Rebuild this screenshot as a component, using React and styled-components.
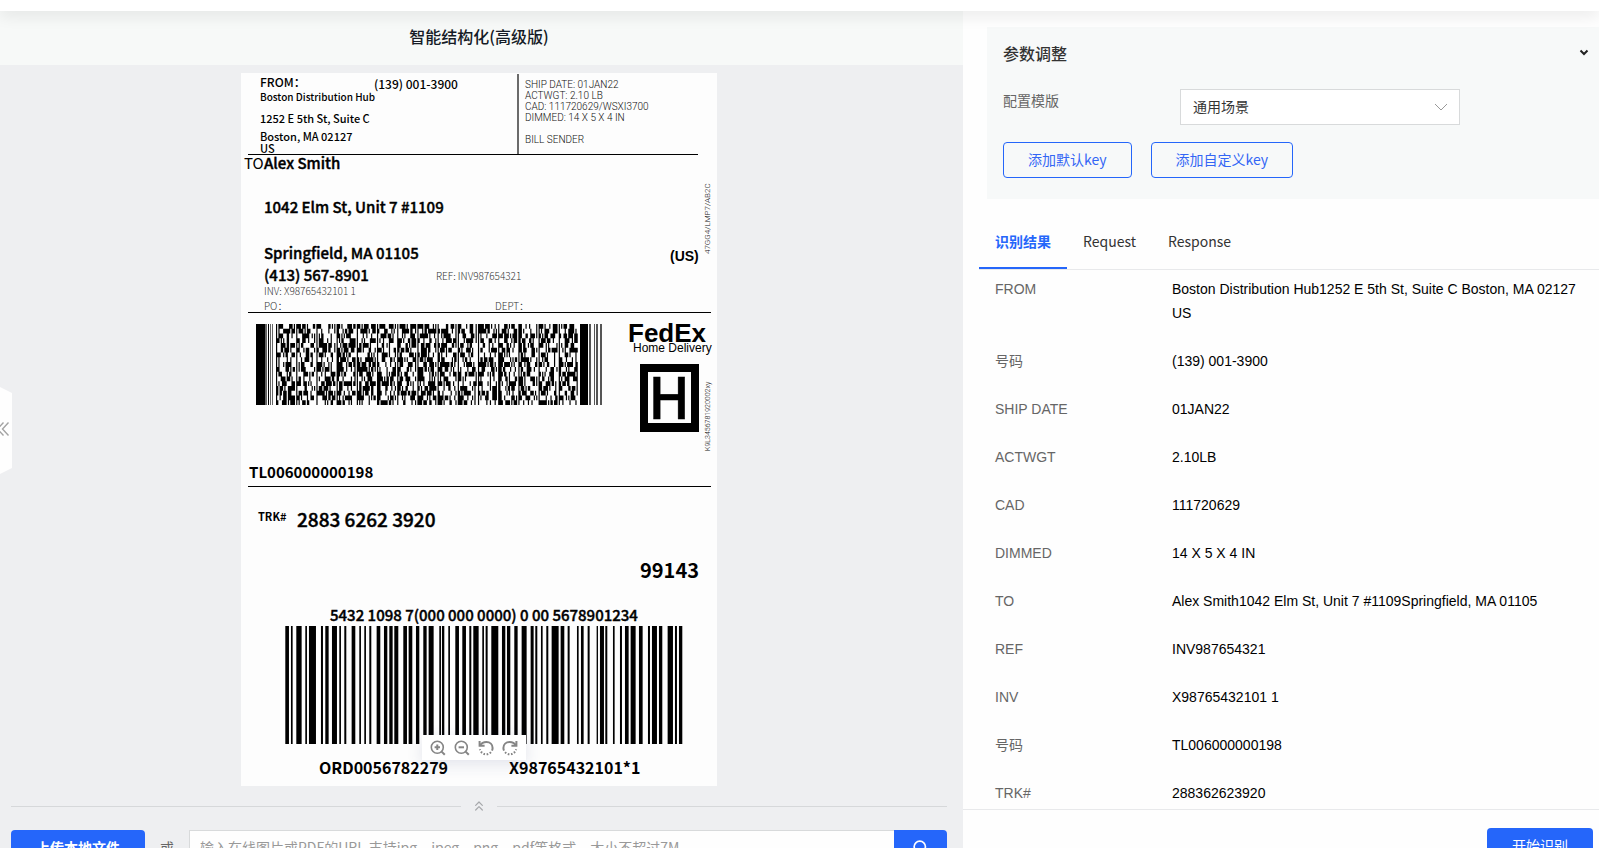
import React, { useState } from "react";
import styled, { createGlobalStyle } from "styled-components";
import { ChevronsUp, Search } from "lucide-react";

const GlobalStyle = createGlobalStyle`
  * {
    box-sizing: border-box;
  }
  body {
    margin: 0;
    overflow: hidden;
    background: #fefefe;
    font-family: "Noto Sans CJK SC", sans-serif;
    font-size: 14px;
    line-height: 24px;
    color: #333;
  }
  button, input, select {
    font: inherit;
  }
`;

const Page = styled.div`
  min-height: 100vh;
  display: flex;
  flex-direction: column;
`;

const TopBar = styled.header`
  height: 11px;
  background: #fff;
  box-shadow: 0 4px 16px rgba(0, 0, 0, 0.1);
  position: relative;
  z-index: 2;
`;

const Main = styled.main`
  flex: 1;
  display: grid;
  grid-template-columns: minmax(0, 1fr) 636px;
`;

const Workspace = styled.section`
  position: relative;
  display: flex;
  flex-direction: column;
  background: #eeeff1;
`;

const WorkspaceTitle = styled.h1`
  margin: 0;
  padding: 13px 16px 17px 11px;
  background: #f7f9f8;
  font-size: 16px;
  font-weight: 500;
  line-height: 24px;
  text-align: center;
  color: #151b26;
`;

const Stage = styled.div`
  display: flex;
  justify-content: center;
  padding: 8px 16px 12px 11px;
`;

const Preview = styled.div`
  position: relative;
  width: 476px;
  max-width: 100%;
`;

const LabelSheet = styled.svg`
  display: block;
  width: 100%;
  height: auto;
  background: #fdfdfd;
  font-family: "Noto Sans CJK SC", sans-serif;

  .bold {
    font-weight: 700;
  }
  .medium {
    font-weight: 500;
  }
  .semi {
    font-weight: 500;
    stroke: #000;
    stroke-width: 0.4;
  }
  .light {
    font-weight: 300;
    fill: #333;
  }
  .thin {
    font-family: Roboto, "Liberation Sans", sans-serif;
    font-weight: 300;
    fill: #111;
  }
  .arial {
    font-family: "Liberation Sans", sans-serif;
  }
`;

const ZoomBar = styled.div`
  position: absolute;
  left: 50%;
  bottom: 26px;
  margin-left: -57px;
  display: flex;
  gap: 8px;
  padding: 5px 8px 4px;
  background: #fff;
  box-shadow: 0 4px 16px rgba(60, 70, 130, 0.14);
`;

const IconButton = styled.button`
  display: flex;
  padding: 0;
  border: none;
  background: none;
  color: #858585;
  cursor: pointer;
`;

const CollapseHandle = styled.button`
  position: absolute;
  left: 0;
  top: 376px;
  width: 12px;
  height: 87px;
  display: flex;
  align-items: center;
  padding: 0 0 3px;
  border: none;
  background: #fefefe;
  clip-path: polygon(0 0, 100% 6px, 100% 81px, 0 100%);
  color: #a3a3a3;
`;

const Divider = styled.div`
  display: flex;
  align-items: center;
  gap: 10px;
  height: 16px;
  margin: 0 16px 0 11px;
  color: #a6a8ab;
  &::before,
  &::after {
    content: "";
    flex: 1;
    height: 1px;
    background: #d6d8da;
  }
`;

const UploadRow = styled.form`
  display: flex;
  padding: 16px 16px 16px 11px;
`;

const PrimaryButton = styled.button`
  width: ${(props) => props.$width}px;
  height: 36px;
  padding: 0 0 2px;
  border: none;
  border-radius: ${(props) => props.$radius || "4px"};
  background: #2566fa;
  color: #fff;
  font-weight: ${(props) => (props.$bold ? 700 : 400)};
  display: flex;
  align-items: center;
  justify-content: center;
  cursor: pointer;
`;

const Or = styled.span`
  padding: 0 15px;
  line-height: 34px;
  color: #666;
`;

const UrlInput = styled.input`
  flex: 1;
  min-width: 0;
  height: 36px;
  padding: 0 10px 2px;
  border: 1px solid #d8dadb;
  border-right: none;
  border-radius: 0;
  background: #fefefe;
  outline: none;
  &::placeholder {
    color: #999;
  }
`;

const Side = styled.aside`
  display: flex;
  flex-direction: column;
  padding-top: 16px;
`;

const Params = styled.section`
  margin-left: 24px;
  padding: 15px 10px 21px 16px;
  background: #f7f9f9;
`;

const ParamsHead = styled.div`
  display: flex;
  justify-content: space-between;
  align-items: center;
  margin-bottom: 25px;
  h2 {
    margin: 0;
    font-size: 16px;
    font-weight: 500;
    line-height: 22px;
    color: #333;
  }
`;

const Field = styled.div`
  display: flex;
  align-items: flex-start;
  margin-bottom: 17px;
  label {
    width: 177px;
    line-height: 22px;
    color: #666;
  }
`;

const SelectBox = styled.div`
  position: relative;
  width: 280px;
  select {
    display: block;
    width: 100%;
    height: 36px;
    padding: 0 12px 2px;
    border: 1px solid #d8dadb;
    border-radius: 0;
    background: #fff;
    color: #333;
    appearance: none;
  }
  svg {
    position: absolute;
    right: 12px;
    top: 14px;
    pointer-events: none;
  }
`;

const KeyButtons = styled.div`
  display: flex;
  gap: 19px;
`;

const OutlineButton = styled.button`
  height: 36px;
  padding: 0 24px 2px;
  border: 1px solid #2566fa;
  border-radius: 4px;
  background: none;
  color: #3366f5;
  line-height: 24px;
  cursor: pointer;
`;

const Tabs = styled.div`
  display: flex;
  margin: 16px 0 0 16px;
  border-bottom: 1px solid #e8e9eb;
`;

const Tab = styled.button`
  height: 54px;
  padding: 0 16px 2px;
  border: none;
  background: none;
  color: ${(props) => (props.$active ? "#2566fa" : "#333")};
  font-weight: ${(props) => (props.$active ? 700 : 400)};
  box-shadow: ${(props) => (props.$active ? "inset 0 -2px #2566fa" : "none")};
  cursor: pointer;
`;

const ResultTable = styled.table`
  margin: 7px 16px 0 32px;
  border-collapse: collapse;
  font-family: "Liberation Sans", "Noto Sans CJK SC", sans-serif;
  th,
  td {
    padding: 0 0 24px;
    font-weight: 400;
    text-align: left;
    vertical-align: top;
  }
  th {
    width: 177px;
    color: #666;
  }
  td {
    color: #000;
  }
  tr:last-child th,
  tr:last-child td {
    padding-bottom: 4px;
  }
`;

const SideFooter = styled.footer`
  display: flex;
  justify-content: flex-end;
  padding: 18px 6px 16px;
  border-top: 1px solid #e8e9eb;
`;

const results = [
  ["FROM", "Boston Distribution Hub1252 E 5th St, Suite C Boston, MA 02127 US"],
  ["号码", "(139) 001-3900"],
  ["SHIP DATE", "01JAN22"],
  ["ACTWGT", "2.10LB"],
  ["CAD", "111720629"],
  ["DIMMED", "14 X 5 X 4 IN"],
  ["TO", "Alex Smith1042 Elm St, Unit 7 #1109Springfield, MA 01105"],
  ["REF", "INV987654321"],
  ["INV", "X98765432101 1"],
  ["号码", "TL006000000198"],
  ["TRK#", "288362623920"],
];

// start and width of each bar, in thirds of a label unit
const bars = [
  [0, 11], [17, 5], [33, 16], [60, 5], [71, 21], [107, 6], [120, 10], [140, 15],
  [162, 5], [177, 6], [199, 11], [222, 5], [237, 5], [252, 6], [274, 11], [296, 10],
  [312, 10], [327, 12], [354, 11], [370, 11], [392, 10], [414, 10], [430, 15], [462, 5],
  [470, 7], [489, 5], [510, 11], [531, 11], [552, 6], [564, 16], [591, 5], [601, 6],
  [618, 21], [650, 10], [665, 10], [687, 10], [709, 15], [736, 9], [750, 6], [767, 5],
  [783, 6], [799, 21], [826, 11], [847, 6], [875, 5], [887, 8], [907, 6], [934, 4],
  [944, 12], [960, 6], [983, 5], [1004, 6], [1019, 11], [1036, 15], [1061, 11], [1088, 6],
  [1100, 15], [1121, 10], [1147, 16], [1169, 6], [1181, 10],
];

// stacked code: 17 rows, 15 codewords a row, each 4 bars and 4 spaces in 17 modules
function stackedCode() {
  let seed = 20117;
  const next = (n) => {
    seed = (seed * 1103515245 + 12345) % 2147483648;
    return Math.floor((seed / 2147483648) * n);
  };
  const cells = [];
  for (let row = 0; row < 17; row++) {
    for (let col = 0; col < 15; col++) {
      const parts = [1, 1, 1, 1, 1, 1, 1, 1];
      [3, 2, 2, 1, 1].forEach((extra) => {
        parts[next(8)] += extra;
      });
      let x = col * 17;
      parts.forEach((w, i) => {
        if (i % 2 === 0) cells.push(`M${x} ${row}h${w}v1h-${w}z`);
        x += w;
      });
    }
  }
  return cells.join("");
}

const codePath = stackedCode();

function ShippingLabel() {
  return (
    <LabelSheet viewBox="0 0 476 713" role="img" aria-label="FedEx Home Delivery">
      <g fontSize="11" className="medium">
        <text x="19" y="14" fontSize="12">FROM：</text>
        <text x="133" y="16" fontSize="12">(139) 001-3900</text>
        <text x="19" y="28" fontSize="10">Boston Distribution Hub</text>
        <text x="19" y="50">1252 E 5th St, Suite C</text>
        <text x="19" y="68">Boston, MA 02127</text>
        <text x="19" y="80">US</text>
      </g>
      <g fontSize="10" className="thin">
        <text x="284" y="15">SHIP DATE: 01JAN22</text>
        <text x="284" y="26">ACTWGT: 2.10 LB</text>
        <text x="284" y="37">CAD: 111720629/WSXI3700</text>
        <text x="284" y="48">DIMMED: 14 X 5 X 4 IN</text>
        <text x="284" y="70">BILL SENDER</text>
      </g>
      <path d="M276 1h2v80h-2z" fill="#6b6b6b" />
      <path d="M7 81h450v1H7zM7 239h463v1H7zM7 413h463v1H7z" />

      <text x="3" y="96" fontSize="15">TO</text>
      <g fontSize="15" className="semi">
        <text x="23" y="96">Alex Smith</text>
        <text x="23" y="140">1042 Elm St, Unit 7 #1109</text>
        <text x="23" y="186">Springfield, MA 01105</text>
        <text x="23" y="208">(413) 567-8901</text>
      </g>
      <text x="429" y="188" fontSize="14" className="arial bold">(US)</text>
      <text fontSize="8" className="thin" transform="translate(469 181) rotate(-90)">47GG4/LMP7/AB2C</text>
      <g fontSize="10" className="light">
        <text x="195" y="207">REF: INV987654321</text>
        <text x="23" y="222">INV: X98765432101 1</text>
        <text x="23" y="237">PO：</text>
        <text x="254" y="237">DEPT：</text>
      </g>

      <path d="M15 251h9v81h-9zM27 251h1v81h-1z" />
      <path d="M24 251h2v81h-2zM29 251h1v81h-1zM31 251h1v81h-1z" fill="#666" />
      <g transform="translate(35 251) scale(1.188 4.765)">
        <path d={codePath} />
      </g>
      <path d="M339 251h8v81h-8z" />
      <path d="M348 251h2v81h-2zM353 251h1v81h-1zM355 251h2v81h-2zM359 251h2v81h-2z" fill="#555" />

      <text x="387" y="269" fontSize="26" className="arial bold">FedEx</text>
      <text x="392" y="279" fontSize="12" className="arial">Home Delivery</text>
      <path d="M399 291h59v68h-59zM407 299v51h43v-51z" fillRule="evenodd" />
      <text x="428" y="346" fontSize="57" textAnchor="middle" className="semi">H</text>
      <text fontSize="7" className="thin" transform="translate(469 378) rotate(-90)">K9L3456781920002xy</text>

      <g className="bold">
        <text x="8" y="405" fontSize="15">TL006000000198</text>
        <text x="17" y="448" fontSize="11">TRK#</text>
        <text x="56" y="454" fontSize="19" className="semi">2883 6262 3920</text>
        <text x="399" y="505" fontSize="20">99143</text>
        <text x="89" y="548" fontSize="15" className="semi">5432 1098 7(000 000 0000) 0 00 5678901234</text>
        <text x="78" y="701" fontSize="16">ORD0056782279</text>
        <text x="268" y="701" fontSize="16">X98765432101*1</text>
      </g>
      {bars.map(([x, w]) => (
        <rect key={x} x={44.3 + x / 3} y="553" width={w / 3} height="118" />
      ))}
    </LabelSheet>
  );
}

function ZoomIcon({ plus }) {
  return (
    <svg width="16" height="16" viewBox="0 0 16 16" fill="none" stroke="currentColor" strokeWidth="1.6">
      <circle cx="7.3" cy="7.3" r="6" />
      <path d="M11.6 11.6l3.2 3.2" strokeWidth="2" />
      <path d={plus ? "M4.6 7.3h5.4M7.3 4.6v5.4" : "M4.6 7.3h5.4"} strokeWidth="2" />
    </svg>
  );
}

function RotateIcon({ right }) {
  return (
    <svg width="16" height="16" viewBox="0 0 16 16" fill="none" stroke="currentColor" strokeWidth="2">
      <g transform={right ? "matrix(-1 0 0 1 16 0)" : undefined}>
        <path d="M1.6 1v4.8h5" />
        <path d="M2 5.6C3.4 3.2 5.6 2 8.4 2c3.6 0 6.2 2.6 6.2 6 0 1.2-.2 1.8-.6 2.6" />
        <path d="M12.9 12.2a6.4 6.4 0 0 1-11-3" strokeDasharray="1.6 1.6" />
      </g>
    </svg>
  );
}

export default function App() {
  const [tab, setTab] = useState("识别结果");

  return (
    <Page>
      <GlobalStyle />
      <TopBar />
      <Main>
        <Workspace>
          <WorkspaceTitle>智能结构化(高级版)</WorkspaceTitle>
          <Stage>
            <Preview>
              <ShippingLabel />
              <ZoomBar>
                <IconButton aria-label="放大"><ZoomIcon plus /></IconButton>
                <IconButton aria-label="缩小"><ZoomIcon /></IconButton>
                <IconButton aria-label="向左旋转"><RotateIcon /></IconButton>
                <IconButton aria-label="向右旋转"><RotateIcon right /></IconButton>
              </ZoomBar>
            </Preview>
          </Stage>
          <CollapseHandle aria-label="收起">
            <svg width="12" height="14" viewBox="0 0 12 14" fill="none" stroke="currentColor" strokeWidth="1.4">
              <path d="M8.5.5L2.5 7l6 6.5M3.5.5L-2.5 7l6 6.5" />
            </svg>
          </CollapseHandle>
          <Divider>
            <ChevronsUp size={16} strokeWidth={1.8} />
          </Divider>
          <UploadRow onSubmit={(e) => e.preventDefault()}>
            <PrimaryButton type="button" $width={134} $bold>上传本地文件</PrimaryButton>
            <Or>或</Or>
            <UrlInput
              aria-label="URL"
              placeholder="输入在线图片或PDF的URL,支持jpg、jpeg、png、pdf等格式，大小不超过7M"
            />
            <PrimaryButton $width={53} $radius="0 4px 4px 0" aria-label="搜索">
              <Search size={17} strokeWidth={2.4} />
            </PrimaryButton>
          </UploadRow>
        </Workspace>

        <Side>
          <Params>
            <ParamsHead>
              <h2>参数调整</h2>
              <IconButton aria-label="折叠">
                <svg width="10" height="10" viewBox="0 0 10 10" fill="none" stroke="#222" strokeWidth="2">
                  <path d="M1.5 2.5L5 6l3.5-3.5" />
                </svg>
              </IconButton>
            </ParamsHead>
            <Field>
              <label htmlFor="template">配置模版</label>
              <SelectBox>
                <select id="template" defaultValue="通用场景">
                  <option>通用场景</option>
                </select>
                <svg width="14" height="8" viewBox="0 0 14 8" fill="none" stroke="#999">
                  <path d="M1 1l6 6 6-6" />
                </svg>
              </SelectBox>
            </Field>
            <KeyButtons>
              <OutlineButton>添加默认key</OutlineButton>
              <OutlineButton>添加自定义key</OutlineButton>
            </KeyButtons>
          </Params>

          <Tabs role="tablist">
            {["识别结果", "Request", "Response"].map((name) => (
              <Tab
                key={name}
                role="tab"
                aria-selected={tab === name}
                $active={tab === name}
                onClick={() => setTab(name)}
              >
                {name}
              </Tab>
            ))}
          </Tabs>

          <ResultTable>
            <tbody>
              {results.map(([name, value], index) => (
                <tr key={index}>
                  <th scope="row">{name}</th>
                  <td>{value}</td>
                </tr>
              ))}
            </tbody>
          </ResultTable>

          <SideFooter>
            <PrimaryButton $width={106}>开始识别</PrimaryButton>
          </SideFooter>
        </Side>
      </Main>
    </Page>
  );
}
